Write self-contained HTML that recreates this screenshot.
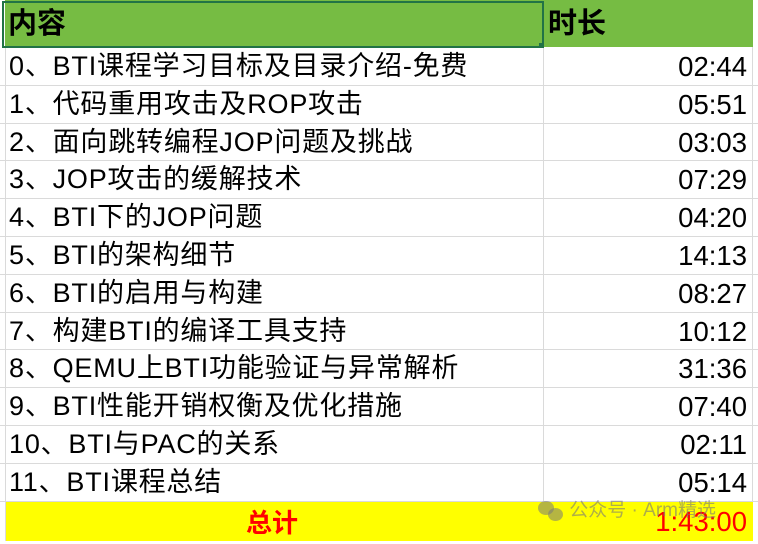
<!DOCTYPE html>
<html><head><meta charset="utf-8"><style>
body{margin:0;width:758px;height:541px;background:#fff;overflow:hidden;position:relative;font-family:"Liberation Sans","Noto Sans CJK SC",sans-serif;}
.r{position:absolute;left:0;width:758px;height:37.8px;border-bottom:1px solid #dadada;box-sizing:border-box;}
.a{position:absolute;left:9px;top:0;line-height:37px;font-size:27px;letter-spacing:0.8px;color:#000;white-space:nowrap;}
.b{position:absolute;right:11px;top:0;line-height:37px;font-size:27.5px;color:#000;}
.v{position:absolute;top:0;height:541px;width:1px;background:#dadada;}
</style></head><body>
<div class="v" style="left:5px"></div>
<div class="v" style="left:543px"></div>
<div class="v" style="left:752px"></div>
<div style="position:absolute;left:5px;top:0;width:748px;height:47px;background:#76bc43;"></div>
<div style="position:absolute;left:2px;top:1px;width:538px;height:43px;border:2px solid #217346;"></div>
<div style="position:absolute;left:539px;top:43px;width:5px;height:5px;background:#217346;"></div>
<div style="position:absolute;left:8px;top:3px;font-size:29px;font-weight:bold;line-height:42px;">内容</div>
<div style="position:absolute;left:548px;top:3px;font-size:29px;font-weight:bold;line-height:42px;">时长</div>
<div class="r" style="top:48px"><span class="a">0、BTI课程学习目标及目录介绍-免费</span><span class="b">02:44</span></div>
<div class="r" style="top:85.8px"><span class="a">1、代码重用攻击及ROP攻击</span><span class="b">05:51</span></div>
<div class="r" style="top:123.6px"><span class="a">2、面向跳转编程JOP问题及挑战</span><span class="b">03:03</span></div>
<div class="r" style="top:161.4px"><span class="a">3、JOP攻击的缓解技术</span><span class="b">07:29</span></div>
<div class="r" style="top:199.2px"><span class="a">4、BTI下的JOP问题</span><span class="b">04:20</span></div>
<div class="r" style="top:237px"><span class="a">5、BTI的架构细节</span><span class="b">14:13</span></div>
<div class="r" style="top:274.8px"><span class="a">6、BTI的启用与构建</span><span class="b">08:27</span></div>
<div class="r" style="top:312.6px"><span class="a">7、构建BTI的编译工具支持</span><span class="b">10:12</span></div>
<div class="r" style="top:350.4px"><span class="a">8、QEMU上BTI功能验证与异常解析</span><span class="b">31:36</span></div>
<div class="r" style="top:388.2px"><span class="a">9、BTI性能开销权衡及优化措施</span><span class="b">07:40</span></div>
<div class="r" style="top:426px"><span class="a">10、BTI与PAC的关系</span><span class="b">02:11</span></div>
<div class="r" style="top:463.8px"><span class="a">11、BTI课程总结</span><span class="b">05:14</span></div>
<div style="position:absolute;left:6px;top:502px;width:747px;height:39px;background:#ffff00;"></div>
<div style="position:absolute;left:246px;top:502px;line-height:42px;font-size:26px;font-weight:bold;color:#ff0000;">总计</div>
<div style="position:absolute;right:11px;top:502px;line-height:40px;font-size:27.5px;color:#ff0000;">1:43:00</div>
<div style="position:absolute;left:538px;top:499px;font-size:19px;color:rgba(120,120,120,0.6);white-space:nowrap;line-height:24px;">
<span style="display:inline-block;width:26px;height:20px;vertical-align:middle;position:relative;"><span style="position:absolute;left:0;top:0;width:16px;height:14px;border-radius:50%;background:rgba(120,120,120,0.55)"></span><span style="position:absolute;left:10px;top:7px;width:15px;height:13px;border-radius:50%;background:rgba(120,120,120,0.55)"></span></span> 公众号 · Arm精选</div>
</body></html>
